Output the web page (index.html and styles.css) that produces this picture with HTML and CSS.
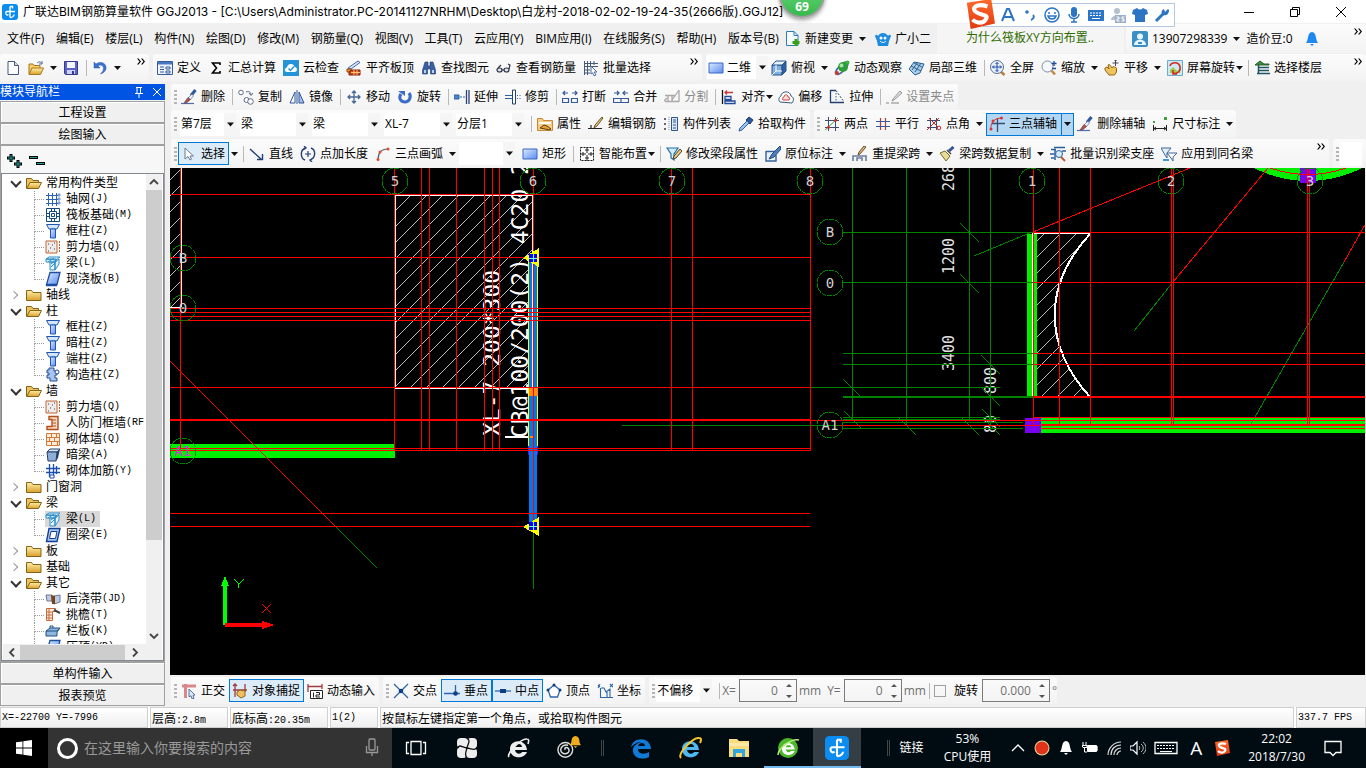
FILE: index.html
```html
<!DOCTYPE html>
<html lang="zh-CN">
<head>
<meta charset="utf-8">
<title>广联达BIM钢筋算量软件 GGJ2013</title>
<link rel="stylesheet" href="styles.css">
</head>
<body>
<svg class="sprite" aria-hidden="true">
<defs>
<linearGradient id="gf" x1="0" y1="0" x2="0" y2="1"><stop offset="0" stop-color="#fff0a8"/><stop offset="1" stop-color="#d9a02c"/></linearGradient>
<linearGradient id="gb" x1="0" y1="0" x2="1" y2="1"><stop offset="0" stop-color="#dcebff"/><stop offset="1" stop-color="#5a8cf0"/></linearGradient>
<linearGradient id="gs" x1="0" y1="0" x2="0" y2="1"><stop offset="0" stop-color="#ff6a2a"/><stop offset="1" stop-color="#e03a10"/></linearGradient>
</defs>
<symbol id="app" viewBox="0 0 16 16"><rect width="16" height="16" rx="3" fill="#0a8cf0"/><path d="M8 2.500v11M4 7.500h9M4 7.500c-1 3 1 4 2.500 3M8 13.500c3 0 4-2 4-3M8 2.500h2.500v2" fill="none" stroke="#fff" stroke-width="1.400"/></symbol>
<symbol id="new" viewBox="0 0 16 16"><path d="M3 1.500h6.500l4 4v9H3z" fill="#fdfeff" stroke="#44597c"/><path d="M9.500 1.500v4h4" fill="#cfdcf0" stroke="#44597c"/></symbol>
<symbol id="open" viewBox="0 0 16 16"><path d="M1 14V4h4l1 1.500h6V8" fill="#f7cf6a" stroke="#a8761c"/><path d="M1 14.500L4 8h11.500l-3 6.500z" fill="url(#gf)" stroke="#a8761c"/><path d="M9 3c2-2 4-1 5 1m0-3v3h-3" fill="none" stroke="#4a6b9a"/></symbol>
<symbol id="save" viewBox="0 0 16 16"><path d="M1.500 1.500h13v13h-12l-1-1z" fill="#5d62c8" stroke="#343a94"/><path d="M4 2h8v6H4z" fill="#f4f6ff"/><path d="M4 10h8v4H4z" fill="#cdd2ee"/><path d="M9 11h2v3H9z" fill="#343a94"/></symbol>
<symbol id="undo" viewBox="0 0 16 16"><path d="M2 2v6h6L5.800 5.800C9 4 12 6 11.500 9c-.3 2-1.500 3.500-3 5 4-1.500 6-4 5.500-7C13.500 2.500 8 1 4 4z" fill="#3b6fd0" stroke="#2a58b0" stroke-width=".5"/></symbol>
<symbol id="define" viewBox="0 0 16 16"><path d="M.5 1.500h15v13H.5z" fill="#eef3fb" stroke="#345d9c"/><path d="M1 2h14v2.500H1z" fill="#4a78c0"/><path d="M3 7h4M3 9.500h4M3 12h4M9 7h4v2H9zM9 11h4v2H9z" stroke="#345d9c" fill="none"/></symbol>
<symbol id="sigma" viewBox="0 0 16 16"><path d="M12 5V3H4.500L8.500 8l-4 5H12v-2" fill="none" stroke="#000" stroke-width="1.600"/></symbol>
<symbol id="cloud" viewBox="0 0 16 16"><path d="M0 0h16v16H0z" fill="#2395d6"/><path d="M4 12c-3 0-3-4 0-4.500C4.500 3 11 3 11.500 7c3 0 3.500 5 0 5z" fill="#fff"/><path d="M5.500 8.500l2 2 3.500-4" stroke="#2395d6" fill="none" stroke-width="1.500"/></symbol>
<symbol id="align" viewBox="0 0 16 16"><path d="M2 8l10-7 2 1.500-9 6.500z" fill="#d9e6fa" stroke="#4a6ba8"/><path d="M1 9h4v3H1z" fill="#e99b1e" stroke="#95490d"/><path d="M5 10h9v5H3v-3z" fill="#c9441a" stroke="#7c2208"/><path d="M5 12.500h9M8 10v5M11 10v5" stroke="#ffc27a"/></symbol>
<symbol id="find" viewBox="0 0 16 16"><path d="M4 2h3v4h2V2h3l2.500 8v4h-5V9h-3v5h-5v-4z" fill="#3a5fa0" stroke="#1e3b70" stroke-width=".6"/><path d="M3 10h2v3H3zM11 10h2v3h-2z" fill="#bcd0f0"/></symbol>
<symbol id="glasses" viewBox="0 0 16 16"><ellipse cx="3.500" cy="10" rx="2.500" ry="2" fill="#dce6f0" stroke="#334" stroke-width="1.200"/><ellipse cx="10.500" cy="10" rx="2.500" ry="2" fill="#dce6f0" stroke="#334" stroke-width="1.200"/><path d="M6 10h2M2 8l3-3M13 9l1-4-2-1" fill="none" stroke="#334" stroke-width="1.200"/></symbol>
<symbol id="batch" viewBox="0 0 16 16"><path d="M1.500 1v14M4.500 1v14M1 3.500h14M1 6.500h14M7.500 1v5M11 1v4M1 10h6M1 13h6" stroke="#445a78" fill="none"/><path d="M8 6l6 6h-3l2 3-2 .8-1.500-3L8 14z" fill="#fff" stroke="#4c6da0"/></symbol>
<symbol id="rect" viewBox="0 0 16 16"><path d="M1 3h14v10H1z" fill="url(#gb)" stroke="#3868c8"/></symbol>
<symbol id="cube" viewBox="0 0 16 16"><path d="M1 5h10v10H1z" fill="#7fb0e0" stroke="#28528c"/><path d="M1 5l4-4h10l-4 4z" fill="#e9f3fd" stroke="#28528c"/><path d="M11 5l4-4v10l-4 4z" fill="#2d629e" stroke="#28528c"/><path d="M5 5v6h6M5 11l-4 4" stroke="#fff" fill="none"/></symbol>
<symbol id="orbit" viewBox="0 0 16 16"><ellipse cx="7.500" cy="8" rx="8" ry="3" transform="rotate(-45 8 8)" fill="none" stroke="#3568a8" stroke-width="1.500"/><circle cx="9" cy="7" r="5" fill="#2d9d3e"/><circle cx="7.500" cy="5.500" r="2" fill="#a6e6a0"/><circle cx="3" cy="13" r="2" fill="#d23a28"/><circle cx="13.500" cy="2.500" r="2" fill="#3cb43c"/></symbol>
<symbol id="local3d" viewBox="0 0 16 16"><path d="M0 9l5-7 10 2-4 9-5 2z" fill="#a9cdea" stroke="#2f638e"/><path d="M2 6l10 5M3 10l6-8M6 12l6-9M5 3l8 4" stroke="#2f638e" fill="none"/></symbol>
<symbol id="full" viewBox="0 0 16 16"><path d="M10 11l4.500 4" stroke="#b97d35" stroke-width="2.500"/><circle cx="7" cy="7" r="6.500" fill="#e7f0fc" stroke="#5b6f90"/><path d="M7 2.500v9M2.500 7h9M5.500 4L7 2.500 8.500 4M5.500 10L7 11.500 8.500 10M4 5.500L2.500 7 4 8.500M10 5.500L11.500 7 10 8.500" stroke="#1c4aa0" fill="none"/></symbol>
<symbol id="zoomi" viewBox="0 0 16 16"><path d="M10 10l4 4.500" stroke="#c58a3f" stroke-width="2.500"/><circle cx="6.500" cy="6.500" r="5.500" fill="#f5f9ff" stroke="#7d8ba3"/><path d="M13 1v5M10.500 3.500h5M11 8.500h4" stroke="#1c4aa0" stroke-width="1.300"/></symbol>
<symbol id="pan" viewBox="0 0 16 16"><path d="M1 8l2-1 2 2-1-4 1.500-.5L8 8l1-1.500 1.500.5 2 1v4l-2 3H5l-4-5z" fill="#efc45e" stroke="#916817"/><path d="M11.500 0v6M8.500 3h6M10.500 1l1-1 1 1" stroke="#445" fill="none"/></symbol>
<symbol id="rot3" viewBox="0 0 16 16"><path d="M.5.500h15v15H.5z" fill="#cdeaf4" stroke="#6aaccc"/><path d="M3 10l3-3 4 4 3-3v5H3z" fill="#9ccb4d"/><path d="M3 6c1-4 9-5 10 1s-5 7-7 6m0-3v4h4" fill="none" stroke="#d42a20" stroke-width="1.600"/></symbol>
<symbol id="floor" viewBox="0 0 16 16"><path d="M1 5l5-4 4 3h5v1z" fill="#3d8a3f" stroke="#22602a"/><path d="M4 7.500h11M4 10.500h11M3 13.500h13M4.500 5v9" stroke="#1d5660" stroke-width="1.500"/></symbol>
<symbol id="broom" viewBox="0 0 16 16"><path d="M0 14.500h13" stroke="#4d6dac" stroke-width="1.200"/><path d="M14.500 1L10 6.500" stroke="#2e589e" stroke-width="3"/><path d="M11 5L7 9l2 2 3.500-4z" fill="#e9edf6" stroke="#607090" stroke-width=".7"/><path d="M7 8.500l2.500 2-4 3.500H3z" fill="#b64c40" stroke="#5b5164" stroke-width=".7"/></symbol>
<symbol id="copy" viewBox="0 0 16 16"><circle cx="3" cy="3.500" r="2.300" fill="#fff" stroke="#5d6e85"/><circle cx="8.500" cy="11" r="2.500" fill="#fff" stroke="#5d6e85"/><circle cx="12.500" cy="12.500" r="2.800" fill="#fff" stroke="#5d6e85"/><path d="M8 3c3-1 5 0 5 3m-2-2l2 2.500L15 4" fill="none" stroke="#5d6e85"/></symbol>
<symbol id="mirror" viewBox="0 0 16 16"><path d="M1 14L6 3v11z" fill="#fff" stroke="#2f5596"/><path d="M10 3l5 11h-5z" fill="#a4c0ee" stroke="#2f5596"/><path d="M8 1v14" stroke="#2f5596"/></symbol>
<symbol id="move" viewBox="0 0 16 16"><path d="M8 2v12M2 8h12M6 4l2-2 2 2M6 12l2 2 2-2M4 6L2 8l2 2M12 6l2 2-2 2" stroke="#4a6794" stroke-width="1.300" fill="none"/></symbol>
<symbol id="rotate" viewBox="0 0 16 16"><path d="M12 4c3 4 0 9-4 9S1 9 4 5" fill="none" stroke="#3b6cc8" stroke-width="3"/><path d="M1 2h7v5z" fill="#3b6cc8"/></symbol>
<symbol id="extend" viewBox="0 0 16 16"><path d="M0 6h5v4H0zM6 8h2M9 8h2" stroke="#2c62a4" fill="#4c86ca"/><path d="M12.500 1v14M15 1v14" stroke="#27436f" stroke-width="1.300"/></symbol>
<symbol id="trim" viewBox="0 0 16 16"><path d="M7.500 1h3v14h-3z" fill="#fff" stroke="#27436f"/><path d="M0 6.500h7M0 9.500h7M12 6.500h1M14.500 6.500h1M12 9.500h1M14.500 9.500h1" stroke="#2c62a4"/></symbol>
<symbol id="brk" viewBox="0 0 16 16"><path d="M.5 9.500h6v4h-6zM9.500 9.500h6v4h-6zM1 4h5M3 2L1 4l2 2M10 4h5M13 2l2 2-2 2" fill="none" stroke="#345a9c" stroke-width="1.200"/></symbol>
<symbol id="merge" viewBox="0 0 16 16"><path d="M.5 9.500h15v4H.5zM1 4h5M4 2l2 2-2 2M10 4h5M12 2l-2 2 2 2M8 9v5" fill="none" stroke="#345a9c" stroke-width="1.200"/></symbol>
<symbol id="splitg" viewBox="0 0 16 16"><path d="M1 6.500h11M1 12.500h14M4 6v7M8 6v7M15 1L8 11M15 1v12M0 12l3-3" stroke="#a9a9a9" fill="none" stroke-width="1.300"/></symbol>
<symbol id="duiqi" viewBox="0 0 16 16"><path d="M1.500 1v14" stroke="#111" stroke-width="1.300"/><path d="M12 3.500H4M6 1.500l-2 2 2 2" fill="none" stroke="#c03a36" stroke-width="1.300"/><path d="M4 7.500h6v3H4zM4 12h10v2.500H4z" fill="#fff" stroke="#234a98" stroke-width="1.300"/></symbol>
<symbol id="offset" viewBox="0 0 16 16"><path d="M2 13c-2-2-1-5 1-6 0-5 9-6 10 0 3 1 3 5 1 7z" fill="#fff" stroke="#35577f"/><path d="M5 11c-1-2 0-3 1-3 0-3 4-3 4 0 2 0 2 2 1 3z" fill="#f9dbd7" stroke="#c8473c"/></symbol>
<symbol id="stretch" viewBox="0 0 16 16"><path d="M7 1.500H1.500v12H15" fill="none" stroke="#24406c" stroke-width="1.300"/><path d="M7 1.500l7 10" stroke="#24406c" stroke-dasharray="2 1.500"/><path d="M7 4v9" stroke="#2c62a4" stroke-dasharray="1.500 1.500"/></symbol>
<symbol id="grip" viewBox="0 0 16 16"><path d="M0 14h3M5 14h8" stroke="#aaa" stroke-width="1.500"/><path d="M14 2L7 10l-1 2 2-1 8-7z" fill="#ddd" stroke="#999"/></symbol>
<symbol id="prop" viewBox="0 0 16 16"><path d="M.5 2.500h5l1 2h9v10H.5z" fill="#f4ce82" stroke="#c98a3a"/><path d="M2 6h12v2H2z" fill="#fff"/><path d="M3 12l4-3 3 1 4 3-2 1-4-1z" fill="#e1a33a" stroke="#5c3c14"/></symbol>
<symbol id="pen" viewBox="0 0 16 16"><path d="M0 12.500h14M3 12V9" stroke="#222" stroke-width="1.200"/><path d="M14 1L7 9l-1 3 3-2 6-8z" fill="#e8c87d" stroke="#6b5228"/></symbol>
<symbol id="list" viewBox="0 0 16 16"><path d="M1 3h3M1 8h3M1 13h3" stroke="#667" stroke-width="2" stroke-dasharray="2 1"/><path d="M6 1v14" stroke="#889" stroke-dasharray="1 1"/><path d="M8.500 1.500h6v13h-6z" fill="#dce8fa" stroke="#2f548e"/><path d="M10 4h3M10 6h3M10 9h3M10 12h3" stroke="#2f548e"/></symbol>
<symbol id="pick" viewBox="0 0 16 16"><path d="M11 1l4 3-3 4-4-4z" fill="#2c5a9c" stroke="#1b3c70"/><path d="M9 5L2 12l-1 3 3-1 7-7z" fill="#9cc1ee" stroke="#2e5f9f"/></symbol>
<symbol id="ax2" viewBox="0 0 16 16"><path d="M4.500 1v14M11.500 1v14M1 4.500h14M1 11.500h14" stroke="#374d72"/><path d="M1 14L14 2" stroke="#3ba33b"/><circle cx="4.500" cy="11.500" r="1.400" fill="#d22"/><circle cx="11.500" cy="4.500" r="1.400" fill="#d22"/></symbol>
<symbol id="axp" viewBox="0 0 16 16"><path d="M5.500 2v12M10.500 2v12" stroke="#b03c3c" stroke-width="1.200"/><path d="M1 5.500h14M1 10.500h14" stroke="#345a9c" stroke-width="1.200"/></symbol>
<symbol id="axa" viewBox="0 0 16 16"><path d="M4.500 2v12M10.500 2v12M1 4.500h13M1 11.500h10" stroke="#374d72"/><path d="M1 14L13 2M3 2l9 9" stroke="#c22"/><circle cx="13" cy="12" r="1.800" fill="#fff" stroke="#c22"/></symbol>
<symbol id="ax3" viewBox="0 0 16 16"><path d="M8.500 2v14M3 7.500h13" stroke="#374d72" stroke-width="1.300"/><path d="M2 14C1 7 5 2 13 2" stroke="#d33" fill="none"/><circle cx="2" cy="13" r="1.500" fill="#d33"/><circle cx="4" cy="5" r="1.500" fill="#d33"/><circle cx="12.500" cy="2" r="1.500" fill="#d33"/></symbol>
<symbol id="dim" viewBox="0 0 16 16"><path d="M1.500 9v6M14.500 9v6M2 12.500h12M4 11l-2 1.500L4 14M12 11l2 1.500-2 1.500" stroke="#222" fill="none"/><path d="M1 5h2v2H1zM12 1h3v3h-3z" fill="#3aa53a"/></symbol>
<symbol id="sel" viewBox="0 0 16 16"><path d="M4 2v11l3-2.500L9 14l1.500-.8L9 10h3.500z" fill="#fff" stroke="#6b7b92"/></symbol>
<symbol id="line" viewBox="0 0 16 16"><path d="M1 3l11 10M13.500 8v5.500H8" stroke="#213f78" stroke-width="1.400" fill="none"/></symbol>
<symbol id="ptlen" viewBox="0 0 16 16"><path d="M6 2C0 3 0 12 5 14M10 14c6-2 6-10 1-12M3 4l3-2-2-2M13 12l-3 2 2 2" fill="none" stroke="#213f78" stroke-width="1.400"/><path d="M8 5v6M5 8h6" stroke="#213f78" stroke-width="1.200"/></symbol>
<symbol id="arc3" viewBox="0 0 16 16"><path d="M3 14C3 7 6 3 13 3" fill="none" stroke="#566" stroke-width="1.200"/><circle cx="3" cy="13.500" r="1.500" fill="#e54a2e"/><circle cx="5" cy="6" r="1.500" fill="#e54a2e"/><circle cx="13" cy="3" r="1.500" fill="#e54a2e"/></symbol>
<symbol id="smart" viewBox="0 0 16 16"><path d="M1.500 1.500h13v13h-13z" fill="#fff" stroke="#111" stroke-dasharray="2 1"/><path d="M8 1v14M1 8h14M6 4h4M6 12h4M4 6v4M12 6v4" stroke="#222"/><path d="M7 7h2v2H7z" fill="#fff"/></symbol>
<symbol id="filterpen" viewBox="0 0 16 16"><path d="M1 2h11L8 8v6l-3-2V8z" fill="#d4ecfa" stroke="#1f6fa8" stroke-width="1.200"/><path d="M14 3L8 10l-1 3 3-1 6-7z" fill="#e9c679" stroke="#4d422a"/></symbol>
<symbol id="notepen" viewBox="0 0 16 16"><path d="M1 5.500h9M1 5v10h10V9" fill="#e8f1fb" stroke="#375f9a" stroke-width="1.400"/><path d="M15 0L7 8l-3 5 5-2 7-8z" fill="#4d7fbf" stroke="#234977"/></symbol>
<symbol id="span" viewBox="0 0 16 16"><path d="M1 15v-5h13v5M5 15v-3h5v3" fill="none" stroke="#6b7f9c" stroke-width="1.600"/><path d="M14 1L8 8l-2 1 1-3 5-6z" fill="#dfb47a" stroke="#6b512b"/></symbol>
<symbol id="brush" viewBox="0 0 16 16"><path d="M14.500 1L10 5" stroke="#34559a" stroke-width="3"/><path d="M6 5l5 5-4 5-6-8z" fill="#e8dc95" stroke="#7b6b2f"/><path d="M8 4l4 4" stroke="#444" stroke-width="1.500"/></symbol>
<symbol id="batchid" viewBox="0 0 16 16"><path d="M1 3.500h5M4 1.500h11M0 8h4M1 12h3M12 5h4M5 4v10" stroke="#2b5f9c" fill="none" stroke-width="1.500"/><circle cx="9" cy="8" r="3.500" fill="#d6ebfa" stroke="#2b5f9c"/><path d="M11 11l4 4" stroke="#bd5a35" stroke-width="2"/></symbol>
<symbol id="apply" viewBox="0 0 16 16"><path d="M0 2h10L6 7v5L4 9z" fill="#e4effc" stroke="#3e679f"/><path d="M6 7h10l-4 4v4l-2-3z" fill="#fff" stroke="#3e679f"/><path d="M2 14h6" stroke="#3e9ad0" stroke-width="2"/></symbol>
<symbol id="newchg" viewBox="0 0 16 16"><path d="M1.500.500H9l4 4v10H1.500z" fill="#f5faff" stroke="#2c7cb8"/><path d="M9 .5v4h4" fill="none" stroke="#2c7cb8"/><path d="M11 8v7M7.500 11.500h7" stroke="#36a01c" stroke-width="3"/></symbol>
<symbol id="gxe" viewBox="0 0 16 16"><path d="M0 5c1-2 2-1 3 0 2-4 8-4 10 0 1-1 2-2 3 0l-2 5-1 5H3l-1-5z" fill="#1d8be0"/><circle cx="6" cy="7" r="1.500" fill="#fff"/><circle cx="10" cy="7" r="1.500" fill="#fff"/><path d="M5 10c2 2 4 2 6 0" stroke="#fff" fill="none"/></symbol>
<symbol id="user" viewBox="0 0 16 16"><rect width="16" height="16" rx="2" fill="#3a8fc4"/><circle cx="8" cy="5.500" r="3" fill="#e9f5fc"/><path d="M2 14c0-7 12-7 12 0z" fill="#e9f5fc"/><path d="M6 12h4" stroke="#3a8fc4" stroke-width="2"/></symbol>
<symbol id="bell" viewBox="0 0 16 16"><path d="M8 1c5 1 3 7 6 11H2c3-4 1-10 6-11zM6 13h4l-2 2z" fill="currentColor"/></symbol>
<symbol id="folder" viewBox="0 0 16 16"><path d="M.5 13.500v-10h5l1.500 2h8v8z" fill="url(#gf)" stroke="#856417"/></symbol>
<symbol id="folderop" viewBox="0 0 16 16"><path d="M.5 13.500v-10h5l1.500 2h5.500v2" fill="#e9c35f" stroke="#856417"/><path d="M.8 13.500L4 7.500h11.500l-3 6z" fill="url(#gf)" stroke="#856417"/></symbol>
<symbol id="t-axis" viewBox="0 0 16 16"><path d="M3.500 2v13M7.500 2v13M11.500 2v13M1 4.500h13M1 8.500h13M1 12.500h13" stroke="#2b62b4"/><path d="M13 3h2v2h-2zM13 7h2v2h-2zM13 11h2v2h-2z" fill="#fff" stroke="#2b62b4" stroke-width=".7"/></symbol>
<symbol id="t-raft" viewBox="0 0 16 16"><path d="M1.500 1.500h13v13h-13zM4.500 4.500h7v7h-7zM6.500 6.500h3v3h-3z" fill="none" stroke="#124a80"/><path d="M1 6.500h3M1 9.500h3M12 6.500h3M12 9.500h3M6.500 1v3M9.500 1v3M6.500 12v3M9.500 12v3" stroke="#124a80"/></symbol>
<symbol id="t-col" viewBox="0 0 16 16"><path d="M1.500 1.500h13L12 6H4z" fill="#d5e5fd" stroke="#1e56b4"/><path d="M5.500 6h5v9h-5z" fill="url(#gb)" stroke="#1e56b4"/></symbol>
<symbol id="t-wall" viewBox="0 0 16 16"><path d="M1 2h11v12H1z" fill="#ececec" stroke="#c5622c"/><path d="M3 5h1M7 6h1M5 9h1M9 10h1M3 12h1M9 4h1" stroke="#444"/><path d="M14.500 2v12" stroke="#c5622c" stroke-dasharray="2 1"/></symbol>
<symbol id="t-beam" viewBox="0 0 16 16"><path d="M1 4l3-2h11l-4 3zM1 4h10v3H1zM5 7h5v8H5zM10 7l4-3v5l-4 6z" fill="#e3f4fd" stroke="#2d8cc8"/><path d="M3 7l6-4M6 9l6-5M6 12l4-4" stroke="#2d8cc8"/></symbol>
<symbol id="t-slab" viewBox="0 0 16 16"><path d="M5 1.500h10l-3 12H1.500z" fill="url(#gb)" stroke="#1e4ea0" stroke-width="1.300"/><path d="M1 14.500h11" stroke="#1e4ea0" stroke-width="1.500"/></symbol>
<symbol id="t-gz" viewBox="0 0 16 16"><path d="M4 1h5v3h3v4h-2v3h2v3H5v-3H2V8h2V6H2V3h2z" fill="#a9c4f0" stroke="#234c94"/><circle cx="12" cy="5" r="2" fill="#fff" stroke="#234c94"/></symbol>
<symbol id="t-rf" viewBox="0 0 16 16"><path d="M4 1.500h9v13H2v-3h5v-7H4z" fill="#f7dcc8" stroke="#b14d16" stroke-width="1.400"/><path d="M8 5h3M8 8h3M8 11h3" stroke="#b14d16"/></symbol>
<symbol id="t-brick" viewBox="0 0 16 16"><path d="M1.500 2.500h13v12h-13zM1 6.500h14M1 10.500h14M6.500 2v4M11.500 2v4M4.500 6v4M9.500 6v4M6.500 10v4M12.500 10v4" fill="#fdebdc" stroke="#d07a3c"/></symbol>
<symbol id="t-dark" viewBox="0 0 16 16"><path d="M2 5l3-3h10l-3 3z" fill="#dce6f4" stroke="#24416e"/><path d="M2 5h10l-1 9H3z" fill="#8fafd8" stroke="#24416e"/><path d="M12 5l3-3-2 9-2 3z" fill="#24416e"/></symbol>
<symbol id="t-jj" viewBox="0 0 16 16"><path d="M4.500 1v13M8.500 1v13M1 5.500h14M1 9.500h14M11.500 3v8" stroke="#1a4eb0" stroke-width="1.300"/><path d="M5 12h4v3H5z" fill="#fff" stroke="#1a4eb0"/></symbol>
<symbol id="t-ring" viewBox="0 0 16 16"><path d="M4 1.500h11l-3 13H1.500z" fill="#aac6f4" stroke="#143f96" stroke-width="1.400"/><path d="M6 4.500h6l-1.500 7H4.500z" fill="#fff" stroke="#143f96"/></symbol>
<symbol id="t-hj" viewBox="0 0 16 16"><path d="M1 4h6v6H2zM9 5l6-1v7l-6 2z" fill="#b9cbe7" stroke="#6a7894"/><path d="M6 4l4 1v8H7z" fill="#7d4214"/></symbol>
<symbol id="t-tiao" viewBox="0 0 16 16"><path d="M1.500 1.500h9v3h-3v9h-6z" fill="#fdeee2" stroke="#c4683a"/><path d="M1 5h6M1 8h6M1 11h6M4 2v12" stroke="#c4683a"/><path d="M9 3l6 3" stroke="#444" stroke-width="2"/></symbol>
<symbol id="t-lan" viewBox="0 0 16 16"><path d="M1 8l4-3h10l-3 4v4H1z" fill="#8db7dd" stroke="#1f4f80"/><path d="M1 8h11l3-3M5 5V3h3v2" fill="none" stroke="#1f4f80"/></symbol>
<symbol id="ortho" viewBox="0 0 16 16"><path d="M1 3h14M4.500 1v14" stroke="#d9888a" stroke-width="3"/><path d="M8 6l6 6-2 .3 1 3-2 .5-1-3-2 1z" fill="#dde9f8" stroke="#51749f"/></symbol>
<symbol id="snap" viewBox="0 0 16 16"><path d="M3 1v13M13 1v8M1 7h14M1 3l2-2 2 2" stroke="#a0383c" fill="none" stroke-width="1.300"/><path d="M5 9l3-2 5 1v5l-4 2-4-3z" fill="#efc05d" stroke="#8c6417"/></symbol>
<symbol id="dyn" viewBox="0 0 16 16"><path d="M1 1v8M15 1v5M1 3.500h14" stroke="#9f3c40" fill="none" stroke-width="1.300"/><path d="M3.500 7.500h12v8h-12z" fill="#fff" stroke="#222"/><path d="M6.500 9.500v5M9 9.500h3.500V12H9v2h4" fill="none" stroke="#222"/></symbol>
<symbol id="cross" viewBox="0 0 16 16"><path d="M1 1l14 14M15 1L1 15" stroke="#2c65a8" stroke-width="1.300"/><circle cx="8" cy="8" r="2.300" fill="#0d3f80"/></symbol>
<symbol id="perp" viewBox="0 0 16 16"><path d="M0 10.500h16M11.500 2v9" stroke="#2c65a8" stroke-width="1.300"/><circle cx="11.500" cy="10.500" r="2.300" fill="#0d3f80"/></symbol>
<symbol id="mid" viewBox="0 0 16 16"><path d="M0 8h16" stroke="#2c65a8" stroke-width="1.300"/><path d="M5 6h6v4H5z" fill="#0d3f80"/></symbol>
<symbol id="vert" viewBox="0 0 16 16"><path d="M8 2l6 5-2.500 7h-7L2 7z" fill="#fff" stroke="#2c65a8" stroke-width="1.300"/><circle cx="8" cy="2" r="1.500" fill="#0d3f80"/><circle cx="14" cy="7" r="1.500" fill="#0d3f80"/><circle cx="2" cy="7" r="1.500" fill="#0d3f80"/></symbol>
<symbol id="coord" viewBox="0 0 16 16"><path d="M3.500 5v9.500H16M4 5h3l2 4 4-3v8M10 9v5M1 2l2 2M3 1L1 5M13 1l3 3M16 1l-3 3" stroke="#2c65a8" fill="none" stroke-width="1.100"/></symbol>
<symbol id="sogou" viewBox="0 0 16 16"><path d="M1 2l13-2 2 13-13 3z" fill="url(#gs)"/><path d="M12 4C6 2 3 5 6 7s7 1 5 4-6 1-7 0" fill="none" stroke="#fff" stroke-width="2.200"/></symbol>
<symbol id="eicon" viewBox="0 0 24 24"><path d="M2 11C4 1 21 0 22 13H9c0 5 6 6 11 3v5C11 25 3 21 4 13 5 9 9 7 12 6 8 6 5 8 2 11zM9 10h7c0-4-6-4-7 0z" fill="currentColor"/></symbol>
<symbol id="ie" viewBox="0 0 24 24"><path d="M4 13C4 3 20 2 21 14H9c1 5 6 4 7 2h5C18 24 4 23 4 13zM9 11h7c0-4-6-4-7 0z" fill="currentColor"/></symbol>
<symbol id="arr" viewBox="0 0 7 4"><path d="M0 0h7L3.500 4z" fill="#111"/></symbol>
<symbol id="more" viewBox="0 0 8 7"><path d="M0 .5h1.500L4 3.500 1.500 6.500H0l2.500-3zM4 .5h1.500L8 3.500 5.500 6.500H4l2.500-3z" fill="#000"/></symbol>
</svg>

<div class="titlebar">
  <svg class="ic"><use href="#app"/></svg>
  <span class="title">广联达BIM钢筋算量软件 GGJ2013 - [C:\Users\Administrator.PC-20141127NRHM\Desktop\白龙村-2018-02-02-19-24-35(2666版).GGJ12]</span>
  <div class="wincontrols">
    <button aria-label="最小化"><svg viewBox="0 0 12 12"><path d="M1 6.500h10" stroke="#000"/></svg></button>
    <button aria-label="还原"><svg viewBox="0 0 12 12"><path d="M1.500 3.500h7v7h-7zM3.500 3V1.500h7v7H9" fill="none" stroke="#000"/></svg></button>
    <button aria-label="关闭"><svg viewBox="0 0 12 12"><path d="M1 1l10 10M11 1L1 11" stroke="#000"/></svg></button>
  </div>
</div>
<div class="bubble">69</div>
<div class="ime">
  <svg class="sg"><use href="#sogou"/></svg>
  <svg viewBox="0 0 16 16"><path d="M2 14L7 2h2l5 12M4 10h8" fill="none" stroke="#2c74c4" stroke-width="2"/></svg>
  <svg viewBox="0 0 16 16"><circle cx="5" cy="5" r="1.800" fill="#2c74c4"/><path d="M11 8c2 2 0 4-2 5" stroke="#2c74c4" stroke-width="2" fill="none"/></svg>
  <svg viewBox="0 0 16 16"><circle cx="8" cy="8" r="7" fill="none" stroke="#2c74c4" stroke-width="1.500"/><path d="M5 5v2M11 5v2M4 9c1 4 7 4 8 0z" stroke="#2c74c4" fill="none" stroke-width="1.500"/></svg>
  <svg viewBox="0 0 16 16"><rect x="5" width="6" height="10" rx="3" fill="#2c74c4"/><path d="M3 7c0 6 10 6 10 0M8 12v3M5 15h6" fill="none" stroke="#2c74c4" stroke-width="1.500"/></svg>
  <svg viewBox="0 0 16 16"><path d="M0 3h16v11H0z" fill="#2c74c4"/><path d="M2 6h12M2 8.500h12" stroke="#fff" stroke-dasharray="2 1"/><path d="M4 11.500h8" stroke="#fff"/></svg>
  <svg viewBox="0 0 16 16"><circle cx="7" cy="4" r="3" fill="#b4c0d0"/><path d="M1 13c0-6 11-6 11 0z" fill="#b4c0d0"/><path d="M5 8h11v8H5z" fill="#9db0c8"/><path d="M6.500 10H9v2H7v2h2.500M14.500 10H12v2h2v2h-2.500" stroke="#fff" fill="none"/></svg>
  <svg viewBox="0 0 16 16"><path d="M1 3l4-2c2 2 4 2 6 0l4 2 1 4-3 1v7H3V8L0 7z" fill="#2c74c4"/></svg>
  <svg viewBox="0 0 16 16"><path d="M2 14l7-7" stroke="#2c74c4" stroke-width="3"/><path d="M14 2l-3 3-1-3c-3 1-3 5-1 6s6 0 6-5z" fill="#2c74c4"/></svg>
</div>

<nav class="menubar">
  <div class="menus"><button>文件(F)</button><button>编辑(E)</button><button>楼层(L)</button><button>构件(N)</button><button>绘图(D)</button><button>修改(M)</button><button>钢筋量(Q)</button><button>视图(V)</button><button>工具(T)</button><button>云应用(Y)</button><button>BIM应用(I)</button><button>在线服务(S)</button><button>帮助(H)</button><button>版本号(B)</button></div>
  <button class="tb"><svg class="ic"><use href="#newchg"/></svg>新建变更<svg class="arr w"><use href="#arr"/></svg></button>
  <button class="tb"><svg class="ic"><use href="#gxe"/></svg>广小二</button>
  <div class="acct">
    <a class="tip" href="#tip">为什么筏板XY方向布置..</a>
    <div class="grp user">
      <button class="tb"><svg class="ic"><use href="#user"/></svg>13907298339<svg class="arr w"><use href="#arr"/></svg></button>
      <span>造价豆:0</span><svg class="ic bl"><use href="#bell"/></svg>
      <button class="more" aria-label="更多"><svg><use href="#more"/></svg></button>
    </div>
  </div>
</nav>

<div class="row top">
  <div class="grp g1">
    <button class="tb"><svg class="ic"><use href="#new"/></svg></button>
    <button class="tb"><svg class="ic"><use href="#open"/></svg><svg class="arr w"><use href="#arr"/></svg></button>
    <button class="tb"><svg class="ic"><use href="#save"/></svg></button><i class="sep"></i>
    <button class="tb"><svg class="ic"><use href="#undo"/></svg><svg class="arr w"><use href="#arr"/></svg></button>
    <button class="more" aria-label="更多"><svg><use href="#more"/></svg></button>
  </div>
  <div class="grp g2">
    <button class="tb"><svg class="ic"><use href="#define"/></svg>定义</button>
    <button class="tb"><svg class="ic"><use href="#sigma"/></svg>汇总计算</button>
    <button class="tb"><svg class="ic"><use href="#cloud"/></svg>云检查</button>
    <button class="tb"><svg class="ic"><use href="#align"/></svg>平齐板顶</button>
    <button class="tb"><svg class="ic"><use href="#find"/></svg>查找图元</button>
    <button class="tb"><svg class="ic"><use href="#glasses"/></svg>查看钢筋量</button>
    <button class="tb"><svg class="ic"><use href="#batch"/></svg>批量选择</button>
    <button class="more" aria-label="更多"><svg><use href="#more"/></svg></button>
  </div>
  <div class="grp g3">
    <span class="iconcombo"><svg class="ic"><use href="#rect"/></svg><select aria-label="视图维度"><option>二维</option></select></span>
    <button class="tb"><svg class="ic"><use href="#cube"/></svg>俯视<svg class="arr w"><use href="#arr"/></svg></button>
    <button class="tb"><svg class="ic"><use href="#orbit"/></svg>动态观察</button>
    <button class="tb"><svg class="ic"><use href="#local3d"/></svg>局部三维</button><i class="sep"></i>
    <button class="tb"><svg class="ic"><use href="#full"/></svg>全屏</button>
    <button class="tb"><svg class="ic"><use href="#zoomi"/></svg>缩放<svg class="arr w"><use href="#arr"/></svg></button>
    <button class="tb"><svg class="ic"><use href="#pan"/></svg>平移<svg class="arr w"><use href="#arr"/></svg></button>
    <button class="tb"><svg class="ic"><use href="#rot3"/></svg>屏幕旋转<svg class="arr"><use href="#arr"/></svg></button><i class="sep"></i>
    <button class="tb"><svg class="ic"><use href="#floor"/></svg>选择楼层</button>
    <button class="more" aria-label="更多"><svg><use href="#more"/></svg></button>
  </div>
</div>

<div class="work">
  <aside class="side">
    <header class="sidehead"><span>模块导航栏</span>
      <svg viewBox="0 0 12 12"><path d="M3 1.500h6M4 1v6M7.500 1v6M2 7.500h8M6 8v4" stroke="#fff" fill="none"/></svg>
      <svg viewBox="0 0 12 12"><path d="M2 2l8 8M10 2l-8 8" stroke="#fff"/></svg>
    </header>
    <button class="sbtn">工程设置</button>
    <button class="sbtn">绘图输入</button>
    <div class="panel">
      <div class="ptools">
        <button aria-label="全部展开"><svg viewBox="0 0 18 16"><path d="M5 1v8M1 5h8M12 7v8M8 11h8" stroke="#000" stroke-width="3"/><path d="M5 2v6M2 5h6M12 8v6M9 11h6" stroke="#1aa39a"/></svg></button>
        <button aria-label="全部折叠"><svg viewBox="0 0 18 16"><path d="M1 4.500h9M8 10.500h9" stroke="#000" stroke-width="3"/><path d="M2 4.500h7M9 10.500h7" stroke="#1aa39a"/></svg></button>
      </div>
      <div class="treebox">
        <div class="treerow">
          <ul class="tree">
            <li class="f o"><svg class="ic"><use href="#folderop"/></svg>常用构件类型</li>
            <li><svg class="ic"><use href="#t-axis"/></svg>轴网<b>(J)</b></li>
            <li><svg class="ic"><use href="#t-raft"/></svg>筏板基础<b>(M)</b></li>
            <li><svg class="ic"><use href="#t-col"/></svg>框柱<b>(Z)</b></li>
            <li><svg class="ic"><use href="#t-wall"/></svg>剪力墙<b>(Q)</b></li>
            <li><svg class="ic"><use href="#t-beam"/></svg>梁<b>(L)</b></li>
            <li class="last"><svg class="ic"><use href="#t-slab"/></svg>现浇板<b>(B)</b></li>
            <li class="f"><svg class="ic"><use href="#folder"/></svg>轴线</li>
            <li class="f o"><svg class="ic"><use href="#folderop"/></svg>柱</li>
            <li><svg class="ic"><use href="#t-col"/></svg>框柱<b>(Z)</b></li>
            <li><svg class="ic"><use href="#t-col"/></svg>暗柱<b>(Z)</b></li>
            <li><svg class="ic"><use href="#t-col"/></svg>端柱<b>(Z)</b></li>
            <li class="last"><svg class="ic"><use href="#t-gz"/></svg>构造柱<b>(Z)</b></li>
            <li class="f o"><svg class="ic"><use href="#folderop"/></svg>墙</li>
            <li><svg class="ic"><use href="#t-wall"/></svg>剪力墙<b>(Q)</b></li>
            <li><svg class="ic"><use href="#t-rf"/></svg>人防门框墙<b>(RF</b></li>
            <li><svg class="ic"><use href="#t-brick"/></svg>砌体墙<b>(Q)</b></li>
            <li><svg class="ic"><use href="#t-dark"/></svg>暗梁<b>(A)</b></li>
            <li class="last"><svg class="ic"><use href="#t-jj"/></svg>砌体加筋<b>(Y)</b></li>
            <li class="f"><svg class="ic"><use href="#folder"/></svg>门窗洞</li>
            <li class="f o"><svg class="ic"><use href="#folderop"/></svg>梁</li>
            <li><span class="cur"><svg class="ic"><use href="#t-beam"/></svg>梁<b>(L)</b></span></li>
            <li class="last"><svg class="ic"><use href="#t-ring"/></svg>圈梁<b>(E)</b></li>
            <li class="f"><svg class="ic"><use href="#folder"/></svg>板</li>
            <li class="f"><svg class="ic"><use href="#folder"/></svg>基础</li>
            <li class="f o"><svg class="ic"><use href="#folderop"/></svg>其它</li>
            <li><svg class="ic"><use href="#t-hj"/></svg>后浇带<b>(JD)</b></li>
            <li><svg class="ic"><use href="#t-tiao"/></svg>挑檐<b>(T)</b></li>
            <li><svg class="ic"><use href="#t-lan"/></svg>栏板<b>(K)</b></li>
            <li><svg class="ic"><use href="#t-slab"/></svg>压顶<b>(YD)</b></li>
          </ul>
          <div class="vbar"><svg viewBox="0 0 15 16"><path d="M4 10l4-4 4 4" fill="none" stroke="#444" stroke-width="1.800"/></svg><i></i><svg class="dn" viewBox="0 0 15 16"><path d="M4 6l4 4 4-4" fill="none" stroke="#444" stroke-width="1.800"/></svg></div>
        </div>
        <div class="hbar"><svg viewBox="0 0 16 15"><path d="M11 4L7 8l4 4" fill="none" stroke="#444" stroke-width="1.800"/></svg><i></i><svg viewBox="0 0 16 15"><path d="M3 4l4 4-4 4" fill="none" stroke="#444" stroke-width="1.800"/></svg></div>
      </div>
    </div>
    <button class="sbtn">单构件输入</button>
    <button class="sbtn">报表预览</button>
  </aside>

  <main class="main">
    <div class="row r2">
      <div class="grp"><i class="grip"></i>
        <button class="tb"><svg class="ic"><use href="#broom"/></svg>删除</button><i class="sep"></i>
        <button class="tb"><svg class="ic"><use href="#copy"/></svg>复制</button>
        <button class="tb"><svg class="ic"><use href="#mirror"/></svg>镜像</button><i class="sep"></i>
        <button class="tb"><svg class="ic"><use href="#move"/></svg>移动</button>
        <button class="tb"><svg class="ic"><use href="#rotate"/></svg>旋转</button><i class="sep"></i>
        <button class="tb"><svg class="ic"><use href="#extend"/></svg>延伸</button>
        <button class="tb"><svg class="ic"><use href="#trim"/></svg>修剪</button><i class="sep"></i>
        <button class="tb"><svg class="ic"><use href="#brk"/></svg>打断</button>
        <button class="tb"><svg class="ic"><use href="#merge"/></svg>合并</button>
        <button class="tb off" disabled><svg class="ic"><use href="#splitg"/></svg>分割</button><i class="sep"></i>
        <button class="tb"><svg class="ic"><use href="#duiqi"/></svg>对齐<svg class="arr"><use href="#arr"/></svg></button>
        <button class="tb"><svg class="ic"><use href="#offset"/></svg>偏移</button>
        <button class="tb"><svg class="ic"><use href="#stretch"/></svg>拉伸</button><i class="sep"></i>
        <button class="tb off" disabled><svg class="ic"><use href="#grip"/></svg>设置夹点</button>
      </div>
    </div>
    <div class="row r3">
      <div class="grp"><i class="grip"></i>
        <select class="cb s first" aria-label="楼层"><option>第7层</option></select>
        <select class="cb" aria-label="构件大类"><option>梁</option></select>
        <select class="cb" aria-label="构件类型"><option>梁</option></select>
        <select class="cb" aria-label="构件"><option>XL-7</option></select>
        <select class="cb" aria-label="分层"><option>分层1</option></select><i class="sep"></i>
        <button class="tb"><svg class="ic"><use href="#prop"/></svg>属性</button>
        <button class="tb"><svg class="ic"><use href="#pen"/></svg>编辑钢筋</button>
        <button class="tb"><svg class="ic"><use href="#list"/></svg>构件列表</button>
        <button class="tb"><svg class="ic"><use href="#pick"/></svg>拾取构件</button>
      </div>
      <div class="grp"><i class="grip"></i>
        <button class="tb"><svg class="ic"><use href="#ax2"/></svg>两点</button>
        <button class="tb"><svg class="ic"><use href="#axp"/></svg>平行</button>
        <button class="tb"><svg class="ic"><use href="#axa"/></svg>点角<svg class="arr w"><use href="#arr"/></svg></button>
        <button class="tb on deep"><svg class="ic"><use href="#ax3"/></svg>三点辅轴<span class="split"><svg class="arr"><use href="#arr"/></svg></span></button>
        <button class="tb"><svg class="ic"><use href="#broom"/></svg>删除辅轴</button>
        <button class="tb"><svg class="ic"><use href="#dim"/></svg>尺寸标注<svg class="arr w"><use href="#arr"/></svg></button>
      </div>
    </div>
    <div class="row r4">
      <div class="grp wide"><i class="grip"></i>
        <button class="tb on"><svg class="ic"><use href="#sel"/></svg>选择</button><svg class="arr"><use href="#arr"/></svg><i class="sep"></i>
        <button class="tb"><svg class="ic"><use href="#line"/></svg>直线</button>
        <button class="tb"><svg class="ic"><use href="#ptlen"/></svg>点加长度</button>
        <button class="tb"><svg class="ic"><use href="#arc3"/></svg>三点画弧<svg class="arr w"><use href="#arr"/></svg></button>
        <select class="cb s" aria-label="弧参数"><option></option></select>
        <button class="tb"><svg class="ic"><use href="#rect"/></svg>矩形</button><i class="sep"></i>
        <button class="tb"><svg class="ic"><use href="#smart"/></svg>智能布置<svg class="arr"><use href="#arr"/></svg></button><i class="sep"></i>
        <button class="tb"><svg class="ic"><use href="#filterpen"/></svg>修改梁段属性</button>
        <button class="tb"><svg class="ic"><use href="#notepen"/></svg>原位标注<svg class="arr w"><use href="#arr"/></svg></button>
        <button class="tb"><svg class="ic"><use href="#span"/></svg>重提梁跨<svg class="arr w"><use href="#arr"/></svg></button>
        <button class="tb"><svg class="ic"><use href="#brush"/></svg>梁跨数据复制<svg class="arr w"><use href="#arr"/></svg></button>
        <button class="tb"><svg class="ic"><use href="#batchid"/></svg>批量识别梁支座</button>
        <button class="tb"><svg class="ic"><use href="#apply"/></svg>应用到同名梁</button>
        <button class="more" aria-label="更多"><svg><use href="#more"/></svg></button>
      </div>
      <div class="grp stub"><i class="grip"></i><i class="blank"></i></div>
    </div>

    <div class="canvas">
      <svg viewBox="170 168 1195 507" preserveAspectRatio="xMinYMin slice" shape-rendering="crispEdges">
        <defs>
          <pattern id="hatch" width="16" height="16" patternUnits="userSpaceOnUse" x="395" y="195"><path d="M-1 17L17 -1" stroke="#bdbdbd"/></pattern>
        </defs>
        <path d="M170 168h11v139h-11z" fill="url(#hatch)"/>
        <path d="M181.500 168v139M170 307.500h11" stroke="#fff"/>
        <path d="M395.500 195.500h137v193h-137z" fill="url(#hatch)" stroke="#fff"/>
        <path d="M170 444h225v14H170z" fill="#0e0"/>
        <path d="M1041 418h325v15h-325z" fill="#0e0"/>
        <circle cx="1308" cy="63" r="118" fill="#0e0"/>
        <g class="cad">
          <text transform="translate(500 436) rotate(-90)">XL-7 200*300</text>
          <text transform="translate(528 438) rotate(-90)">CB@100/200(2) 4C20 2</text>
        </g>
        <path d="M505 437h24" stroke="#fff" stroke-width="2"/>
        <g class="dims">
          <text transform="translate(954 191) rotate(-90)">268</text>
          <text transform="translate(954 274) rotate(-90)">1200</text>
          <text transform="translate(954 371) rotate(-90)">3400</text>
          <text transform="translate(996 394) rotate(-90)">800</text>
          <text transform="translate(996 433) rotate(-90)">80</text>
        </g>
        <path d="M528.500 258v188M537.500 258v188" stroke="#ff0"/>
        <path d="M529 258h8v268h-8z" fill="#0078f0"/>
        <path d="M528 446h10v9h-10z" fill="#7a00f0"/><path d="M529 446h8v19h-8z" fill="#0078f0"/>
        <path d="M532.500 196v192" stroke="#fff"/>
        <path d="M529 388h9v8h-9zM530 436h4v2h-4z" fill="#ff8c1a"/>
        <path d="M1300 168h16v15h-16zM1025 418h16v15h-16z" fill="#7a00f0"/>
        <path d="M1032 233h58C1043 285 1043 345 1090 397h-58z" fill="url(#hatch)" shape-rendering="auto"/>
        <path d="M1027 234h10v162h-10z" fill="#0e0"/>
        <path d="M1090 233.500h-58v163h6" fill="none" stroke="#fff"/>
        <path d="M1090 234C1043 285 1043 345 1090 397" fill="none" stroke="#fff" stroke-width="2"/>
        <g stroke="#008400" fill="none">
          <path d="M852.500 168v252M906.500 168v257M969.500 168v252M990.500 168v262"/>
          <path d="M843 232.500h190M843 282.500h190M843 353.500h190M843 364.500h190M810 387.500h190M843 417.500h157M843 419.500h157M843 422.500h180M622 425.500h401M843 428.500h180"/>
          <path d="M843 397h190" stroke-width="2"/>
          <path d="M960 223l19 19M960 274l19 19M843 379l17 17M981 355l19 19M982 388l18 18M844 411l17 17M899 418l17 17M962 418l17 17M982 409l18 18M982 417l18 18"/>
          <path d="M974 256l58-24M1134 331l39-49M1251 424l93-162M335 526l42 42M533.500 526v63"/>
        </g>
        <g stroke="#f00" fill="none">
          <path d="M180.500 168v282M394.500 168v282M421.500 168v282M429.500 168v282M456.500 168v282M484.500 168v282M492.500 168v282M499.500 168v282M533.500 168v358M671.500 168v282M692.500 168v282M810.500 168v283"/>
          <path d="M170 194.500h640M170 257.500h640M170 308.500h640M170 312.500h640M170 316.500h640M170 320.500h640M170 387.500h640M170 448.500h640M170 450.500h640M170 513.500h640M170 526.500h640"/>
          <path d="M170 420h640M1033 397h333M1041 425h325" stroke-width="2"/>
          <path d="M810 420.500h556M1033 232.500h333M1033 282.500h333M1033 353.500h333M1033 364.500h333M1033 417.500h333M840 425.500h200M1041 428.500h325"/>
          <path d="M1033.500 168v257M1059.500 168v257M1090.500 168v257M1171.500 168v257M1173.500 168v257M1307.500 168v257M1309.500 168v257"/>
          <path d="M170 361l165 165M1033 232l157-64M1173 282l95-114M1366 223l-22 39M1270 168q38 13 76 0"/>
        </g>
        <g fill="#ff0"><path d="M523 258l16-10v19zM523 527l16-10v19z"/></g>
        <path d="M529 254h8v8h-8zM529 522h8v8h-8z" fill="#00f"/>
        <path d="M533.500 254v8M529 258.500h8M533.500 522v8M529 526.500h8" stroke="#7ff"/>
        <g fill="none" stroke="#008400" stroke-dasharray="5 1">
          <circle cx="183" cy="258" r="13"/><circle cx="183" cy="308" r="13"/><circle cx="183" cy="451" r="13"/>
          <circle cx="395" cy="181" r="13"/><circle cx="533" cy="181" r="13"/><circle cx="672" cy="181" r="13"/><circle cx="810" cy="181" r="13"/>
          <circle cx="830" cy="232" r="13"/><circle cx="830" cy="283" r="13"/><circle cx="830" cy="425" r="13"/>
          <circle cx="1032" cy="181" r="13"/><circle cx="1171" cy="181" r="13"/><circle cx="1310" cy="181" r="13"/>
        </g>
        <g class="marks">
          <text x="183" y="263">B</text><text x="183" y="313">0</text><text x="183" y="456" class="hot">A1</text>
          <text x="395" y="186">5</text><text x="533" y="186">6</text><text x="672" y="186">7</text><text x="810" y="186">8</text>
          <text x="830" y="237">B</text><text x="830" y="288">0</text><text x="830" y="430">A1</text>
          <text x="1032" y="186">1</text><text x="1171" y="186">2</text><text x="1310" y="186">3</text>
        </g>
        <path d="M223 625v-39h-2l4-10 4 10h-2v39z" fill="#0f0"/><path d="M225 623h37v-2l12 4-12 4v-2h-37z" fill="#f00"/>
        <path d="M234 579l5 5 5-5M238.500 584v4" stroke="#0f0" fill="none"/><path d="M262 604l9 9M271 604l-9 9" stroke="#f00"/>
      </svg>
    </div>

    <div class="row r5">
      <div class="grp"><i class="grip"></i>
        <button class="tb"><svg class="ic"><use href="#ortho"/></svg>正交</button>
        <button class="tb on"><svg class="ic"><use href="#snap"/></svg>对象捕捉</button>
        <button class="tb"><svg class="ic"><use href="#dyn"/></svg>动态输入</button>
      </div>
      <div class="grp"><i class="grip"></i>
        <button class="tb"><svg class="ic"><use href="#cross"/></svg>交点</button>
        <button class="tb on"><svg class="ic"><use href="#perp"/></svg>垂点</button>
        <button class="tb on"><svg class="ic"><use href="#mid"/></svg>中点</button>
        <button class="tb"><svg class="ic"><use href="#vert"/></svg>顶点</button>
        <button class="tb"><svg class="ic"><use href="#coord"/></svg>坐标</button>
      </div>
      <div class="grp offs"><i class="grip"></i>
        <select class="cb s" aria-label="偏移方式"><option>不偏移</option></select><i class="sep"></i>
        <label for="ox">X=</label><span class="spin"><input id="ox" value="0"><i></i></span><span>mm</span>
        <label for="oy" class="gap">Y=</label><span class="spin"><input id="oy" value="0"><i></i></span><span>mm</span><i class="sep"></i>
        <input type="checkbox" id="rot"><label for="rot" class="dark">旋转</label><span class="spin lg"><input aria-label="旋转角度" value="0.000"><i></i></span><span>°</span>
      </div>
    </div>
  </main>
</div>

<footer class="status">
  <span class="c1">X=-22700 Y=-7996</span><span class="c2"><em>层高</em>:2.8m</span><span class="c3"><em>底标高</em>:20.35m</span><span class="c4">1(2)</span><span class="c5"><em>按鼠标左键指定第一个角点，或拾取构件图元</em></span><span class="c6">337.7 FPS</span>
</footer>

<div class="taskbar">
  <button class="start" aria-label="开始"><svg viewBox="0 0 16 16"><path d="M0 2.300L6.500 1.400v6.200H0zM7.300 1.300L16 0v7.600H7.300zM0 8.400h6.500v6.200L0 13.700zM7.300 8.400H16V16l-8.700-1.300z" fill="#fff"/></svg></button>
  <div class="search"><i class="ring"></i><input placeholder="在这里输入你要搜索的内容" aria-label="搜索"><svg viewBox="0 0 16 20"><rect x="5" y="1" width="6" height="11" rx="1" fill="none" stroke="#999" stroke-width="1.300"/><path d="M2.500 8v6.500h11V8M8 15v3" fill="none" stroke="#999" stroke-width="1.300"/></svg></div>
  <div class="apps tools">
    <button aria-label="任务视图"><svg viewBox="0 0 24 24"><path d="M7 5.500h10v13H7zM5 6.500H2.500v11H5M19 6.500h2.500v11H19" fill="none" stroke="#fff" stroke-width="1.300"/></svg></button>
    <button aria-label="Fan"><svg viewBox="0 0 24 24"><g fill="#eee"><rect x="2" y="2" width="11" height="10" rx="4"/><rect x="12" y="2" width="10" height="11" rx="4"/><rect x="11" y="12" width="11" height="10" rx="4"/><rect x="2" y="11" width="10" height="11" rx="4"/></g><path d="M12 12C7 11 4 8 3 12M12 12c1-5 4-7 0-10M12 12c5 1 8 3 10-1M12 12c-1 4-3 7 0 10" stroke="#111" fill="none" stroke-width="1.300"/></svg></button>
    <button aria-label="浏览器"><svg viewBox="0 0 24 24" color="#eee"><use href="#ie"/><path d="M3 21C0 18 15 2 21 3c2 0 2 2 1 5" fill="none" stroke="#eee" stroke-width="1.600"/></svg></button>
    <button aria-label="提醒"><svg viewBox="0 0 26 26"><circle cx="9" cy="15" r="8" fill="none" stroke="#ddd" stroke-width="1.500"/><path d="M9 15c-2-3 3-4 4 0 1 5-8 6-9 0 0-3 3-6 8-5" fill="none" stroke="#ddd" stroke-width="1.600"/><path d="M20 0c6 1 3 7 6 10H14c3-3 0-9 6-10zM18 11h4l-2 2z" fill="#f0ae1e"/></svg></button>
  </div>
  <i class="tsep mid"></i>
  <div class="apps">
    <button aria-label="Edge"><svg viewBox="0 0 24 24" color="#0f7ad8"><use href="#eicon"/></svg></button>
    <button aria-label="Internet Explorer"><svg viewBox="0 0 24 24" color="#4fb8f0"><use href="#ie"/><path d="M3 22C-1 18 15 1 21 2c3 0 2 3 1 5" fill="none" stroke="#f5c72c" stroke-width="2"/></svg></button>
    <button aria-label="文件资源管理器"><svg viewBox="0 0 24 24"><path d="M2 3h8l2 2h10v16H2z" fill="#f9dc7c"/><path d="M2 7h20v3H2z" fill="#fbe9a8"/><path d="M6 21v-8h12v8h-3v-4H9v4z" fill="#33a5e0"/></svg></button>
    <button class="run" aria-label="360浏览器"><svg viewBox="0 0 24 24" color="#fff"><circle cx="12" cy="12" r="10" fill="#4cb82c"/><use href="#ie" x="3" y="3" width="18" height="18"/><path d="M2 19C2 12 16 2 23 4" fill="none" stroke="#b6ec7c" stroke-width="1.600"/></svg></button>
    <button class="run cur" aria-label="广联达"><svg viewBox="0 0 16 16"><use href="#app"/></svg></button>
  </div>
  <div class="tray">
    <i class="tsep"></i><span class="lnk">链接</span><span class="two cpu">53%<br>CPU使用</span>
    <svg viewBox="0 0 16 16"><path d="M2 11l6-6 6 6" fill="none" stroke="#fff" stroke-width="1.400"/></svg>
    <svg viewBox="0 0 16 16"><circle cx="8" cy="8" r="7.500" fill="#e7d7a0"/><circle cx="8" cy="8" r="6.500" fill="#e0331c"/></svg>
    <svg viewBox="0 0 16 16" color="#fff"><use href="#bell"/></svg>
    <svg viewBox="0 0 16 16"><path d="M5.500 5.500h9v6h-9z" fill="#fff" stroke="#fff"/><path d="M15 7h1v3h-1M1 2v3M4 2v3M0 5.500h5v2H1zM2.500 8v4H5" stroke="#fff" fill="none"/></svg>
    <svg viewBox="0 0 16 16"><path d="M2 15C2 8 8 2 15 2M5 15c0-6 4-10 10-10M8 15c0-4 3-7 7-7M11 15c0-2 2-4 4-4" stroke="#ddd" fill="none" stroke-width="1.200"/></svg>
    <svg viewBox="0 0 16 16"><path d="M0 6h3l4-4v12l-4-4H0z" fill="none" stroke="#fff" stroke-width="1.200"/><path d="M9 6c1 1 1 3 0 4M11 4c3 2 3 6 0 8M13 2c4 4 4 8 0 12" stroke="#bbb" fill="none"/></svg>
    <svg class="kb" viewBox="0 0 24 16"><path d="M1 2.500h22v11H1z" fill="none" stroke="#fff" stroke-width="1.300"/><path d="M3 5.500h18M3 8.500h18" stroke="#fff" stroke-dasharray="2 1"/><path d="M6 11.500h12" stroke="#fff"/></svg>
    <span class="lat">A</span>
    <svg viewBox="0 0 16 16"><use href="#sogou"/></svg>
    <span class="two clock">22:02<br>2018/7/30</span>
    <svg class="note" viewBox="0 0 18 18"><path d="M1 2.500h16v11h-5l-3 3-3-3H1z" fill="none" stroke="#fff" stroke-width="1.300"/></svg>
  </div>
</div>
</body>
</html>
```

FILE: styles.css
```css
* { box-sizing: border-box; }
html, body { margin: 0; height: 100%; }
body {
  display: flex; flex-direction: column; overflow: hidden; position: relative;
  background: #f0f0f0; color: #000;
  font: 12px/16px "Open Sans", "Noto Sans CJK SC", sans-serif;
  white-space: nowrap;
}
button, input, select { font: inherit; color: inherit; margin: 0; padding: 0; border: 0; background: none; border-radius: 0; }
i { font-style: normal; }
.sprite { position: absolute; width: 0; height: 0; }
.ic { width: 16px; height: 16px; flex: none; }
.arr { width: 7px; height: 4px; flex: none; margin: 0 2px 0 -3px; }
.arr.w { margin: 0 3px 0 2px; }
.grp > .arr, .split .arr { margin: 0 2px; }

.titlebar { flex: none; height: 23px; background: #fff; display: flex; align-items: center; padding-left: 2px; gap: 5px; }
.title { flex: 1; font-family: Inter, "Noto Sans CJK SC", sans-serif; }
.wincontrols { display: flex; padding-right: 2px; }
.wincontrols button { width: 46px; height: 20px; display: grid; place-items: center; }
.wincontrols svg { width: 12px; height: 12px; }
.bubble {
  position: absolute; left: 779px; top: -28px; width: 46px; height: 46px; border-radius: 50%;
  background: linear-gradient(#7be08a, #35b94c); border: 2px solid #9a9f9a; box-shadow: 0 2px 4px #0006;
  color: #fff; font-weight: 700; font-size: 12px; display: flex; align-items: flex-end; justify-content: center; padding-bottom: 1px;
}
.ime {
  position: absolute; right: 191px; top: 3px; height: 24px; padding: 0 4px 0 16px; background: #fff;
  border: 1px solid #b5c7de; display: flex; align-items: center; gap: 6px;
}
.ime svg { width: 16px; height: 16px; }
.ime .sg { position: absolute; left: -19px; top: -5px; width: 30px; height: 30px; }

.menubar { flex: none; height: 31px; display: flex; align-items: center; padding-left: 7px; }
.menus { flex: 0 0 772px; display: flex; justify-content: space-between; }
.menubar > .tb { margin-left: 3px; }
.acct { margin-left: auto; display: flex; width: 429px; height: 29px; gap: 2px; }
.tip { flex: 0 0 187px; padding-left: 29px; color: #2f6b00; text-decoration: none; background: #f5f5f5; line-height: 28px; }
.grp {
  display: flex; align-items: center; flex: none; height: 100%; padding: 0 0 0 3px;
  background: linear-gradient(#fbfbfb, #f3f3f3); border-radius: 3px;
}
.user { flex: 1; gap: 3px; }
.user .bl { margin-left: 8px; color: #1e88f0; }
.more { margin-left: auto; align-self: flex-start; padding: 4px 4px 0; line-height: 0; }
.more svg { width: 8px; height: 7px; }
.tb { display: flex; align-items: center; gap: 4px; padding: 0 4px 0 3px; height: 25px; flex: none; }
.tb:has(.arr) { padding-right: 0; }
.off { color: #8a8a8a; }
.on { background: #dcebf8; border: 1px solid #0078d7; padding: 0 3px 0 2px; height: 23px; }
.deep { background: #b3d6f2; }
.split { align-self: stretch; display: flex; align-items: center; border-left: 1px solid #0078d7; }
.sep { width: 1px; height: 16px; background: #b8b8b8; margin: 0 2px 0 3px; flex: none; }
.grip { width: 3px; height: 14px; margin-right: 1px; flex: none; background: repeating-linear-gradient(#b5b5b5 0 2px, transparent 2px 4px); }
.row { display: flex; flex: none; gap: 4px; }
.top { height: 30px; padding-bottom: 3px; }
.g1 { width: 149px; padding-left: 2px; }
.g2 { width: 549px; padding-left: 1px; }
.g3 { flex: 1; padding-left: 1px; }
select {
  appearance: none; height: 23px; padding: 0 14px 0 1px; outline: 0;
  background: url("data:image/svg+xml,%3Csvg xmlns='http://www.w3.org/2000/svg' width='12' height='24'%3E%3Cpath d='M0 0h12v24H0z' fill='%23f5f5f5'/%3E%3Cpath d='M3 10h7l-3.500 4z' fill='%23111'/%3E%3C/svg%3E") right center no-repeat #fff;
}
.cb { width: 68px; margin-right: 4px; flex: none; }
.cb.s { width: 56px; }
.cb.first { margin-left: 2px; }
.iconcombo { display: flex; align-items: center; gap: 2px; background: #fff; padding-left: 1px; }
.iconcombo select { width: 42px; }

.work { flex: 1; display: flex; min-height: 0; gap: 4px; }
.side { flex: 0 0 166px; display: flex; flex-direction: column; padding: 0 1px 1px 0; }
.sidehead { flex: none; height: 16px; background: #0054e3; color: #fff; display: flex; align-items: center; gap: 6px; padding-right: 2px; }
.sidehead span { flex: 1; }
.sidehead svg { width: 12px; height: 12px; }
.sbtn { flex: none; height: 22px; padding-top: 1px; border: 1px solid #a0a0a0; background: #f0f0f0; text-align: center; box-shadow: inset 1px 1px #fff; }
.sidehead + .sbtn { margin-top: 1px; }
.panel { flex: 1; min-height: 0; display: flex; flex-direction: column; border: 1px solid #a0a0a0; }
.ptools { flex: none; height: 27px; display: flex; align-items: center; gap: 4px; padding: 2px 0 0 5px; background: #f7f7f7; }
.ptools svg { width: 18px; height: 16px; display: block; }
.treebox { flex: 1; min-height: 0; display: flex; flex-direction: column; border: 1px solid #828790; background: #fff; padding: 0 1px; }
.treerow { flex: 1; min-height: 0; display: flex; }
.tree { list-style: none; margin: 0; padding: 1px 0 0; flex: 1; overflow: hidden; }
.tree li { position: relative; height: 16px; display: flex; align-items: center; gap: 5px; padding-left: 42px; }
.tree b, .status { font: 10px/16px "Liberation Mono", monospace; }
.tree b { margin-left: -5px; }
.tree li::before { content: ""; position: absolute; left: 31px; top: 0; width: 9px; height: 8px; border: dotted #999; border-width: 0 0 1px 1px; }
.tree li:not(.f):not(.last)::after { content: ""; position: absolute; left: 31px; top: 8px; height: 8px; border-left: 1px dotted #999; }
.tree .f { padding-left: 23px; gap: 4px; }
.tree .f::before { left: 8px; top: 5px; width: 5px; height: 5px; border: solid #999; border-width: 0 1px 1px 0; transform: rotate(-45deg); }
.tree .o::before { left: 9px; top: 3px; width: 6px; height: 6px; border: solid #333; border-width: 0 2px 2px 0; transform: rotate(45deg); }
.tree .cur { display: flex; align-items: center; gap: 5px; background: #d9d9d9; padding-right: 4px; height: 16px; }
.vbar { flex: 0 0 16px; background: #f0f0f0; display: flex; flex-direction: column; }
.vbar svg { width: 15px; height: 16px; flex: none; }
.vbar i { flex: 0 1 350px; background: #cdcdcd; }
.vbar .dn { margin-top: auto; }
.hbar { flex: 0 0 16px; background: #f0f0f0; display: flex; padding-right: 16px; }
.hbar svg { width: 16px; height: 16px; }
.hbar i { flex: 1; background: #cdcdcd; margin: 1px 5px 0 1px; }

.main { flex: 1; min-width: 0; display: flex; flex-direction: column; }
.main .row { padding-left: 1px; }
.r2 { height: 26px; }
.r3 { height: 29px; padding-bottom: 1px; }
.r4 { height: 29px; }
.wide { flex: 1; }
.stub { width: 33px; padding-right: 4px; }
.blank { flex: 1; height: 24px; background: #fff; }
.canvas { flex: 1; min-height: 0; background: #000; overflow: hidden; margin-right: 1px; }
.canvas > svg { display: block; width: 100%; height: 100%; }
.cad { font: 23px "DejaVu Sans Mono", monospace; fill: #fff; white-space: pre; }
.dims { font: 15px "DejaVu Sans Mono", monospace; fill: #e0e0e0; }
.marks { font: 14px "DejaVu Sans Mono", monospace; fill: #d0d0d0; text-anchor: middle; }
.marks .hot { fill: #d03cd0; }
.r5 { height: 32px; padding: 2px 0 3px; }
.offs { color: #707070; }
.offs select { color: #000; }
.offs .dark { color: #000; padding: 0 1px 0 8px; }
.offs .gap { padding-left: 6px; }
.offs input[type="checkbox"] { appearance: none; width: 12px; height: 12px; border: 1px solid #a0a0a0; margin-left: 2px; }
.spin { display: flex; align-items: center; width: 58px; height: 23px; border: 1px solid #7a7a7a; margin: 0 2px 0 3px; }
.spin.lg { width: 68px; }
.spin input { flex: 1; min-width: 0; text-align: right; }
.spin i { width: 18px; height: 16px; background: url("data:image/svg+xml,%3Csvg xmlns='http://www.w3.org/2000/svg' width='18' height='16'%3E%3Cpath d='M8 4l3-3 3 3zM8 12h6l-3 3z' fill='%23555'/%3E%3C/svg%3E"); }

.status { flex: none; height: 21px; display: flex; gap: 2px; background: #fff; }
.status span { border: 1px solid #d0d0d0; background: linear-gradient(#fff, #efefef); padding: 2px 1px 0; }
.status em { font: 12px/16px "Noto Sans CJK SC", sans-serif; }
.c1 { width: 148px; } .c2 { width: 78px; } .c3 { width: 98px; } .c4 { width: 48px; } .c5 { flex: 1; } .c6 { width: 70px; }

.taskbar { flex: none; height: 40px; background: #010c12; color: #fff; display: flex; align-items: center; }
.start { width: 48px; height: 100%; background: #000; display: grid; place-items: center; }
.start svg { width: 16px; height: 16px; }
.search { width: 344px; height: 100%; background: #333; display: flex; align-items: center; padding: 0 12px 0 9px; gap: 6px; }
.ring { width: 21px; height: 21px; border: 3px solid #fff; border-radius: 50%; }
.search input { flex: 1; min-width: 0; font-size: 14px; }
.search input::placeholder { color: #999; opacity: 1; }
.search svg { width: 16px; height: 20px; }
.apps { display: flex; align-items: center; height: 100%; }
.apps button { width: 49px; height: 100%; display: grid; place-items: center; padding-right: 1px; }
.tools button { width: 51px; padding-right: 3px; }
.apps svg { width: 24px; height: 24px; }
.apps .run { border-bottom: 2px solid #76b9ed; padding-top: 2px; }
.apps .cur { background: #343e44; width: 48px; }
.tsep { width: 3px; height: 16px; border: solid #444; border-width: 0 1px; flex: none; }
.mid { margin: 0 13px 0 5px; }
.tray { margin-left: auto; display: flex; align-items: center; gap: 8px; padding-right: 24px; }
.tray svg { width: 16px; height: 16px; flex: none; }
.lnk { margin-left: 2px; }
.two { text-align: center; line-height: 18px; }
.cpu { margin: 0 11px 0 12px; }
.tray .kb { width: 24px; }
.lat { font-size: 19px; width: 20px; text-align: center; }
.clock { margin: 0 11px 0 10px; }
.tray .note { width: 18px; height: 18px; }
```
